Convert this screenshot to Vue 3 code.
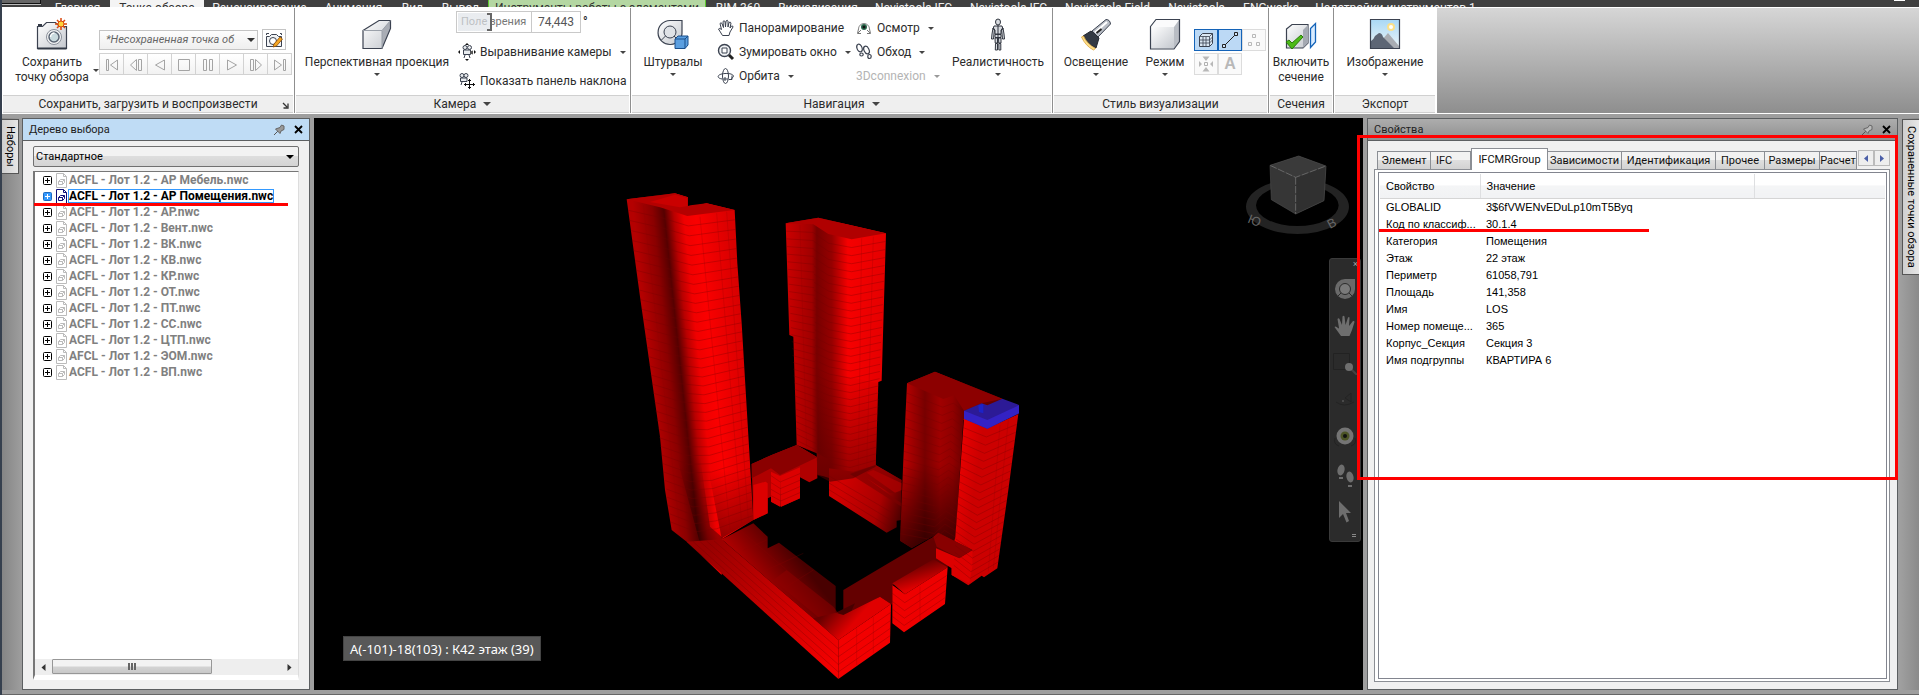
<script setup>
import { ref } from 'vue'

const menuTabs = [
  { label: 'Главная' },
  { label: 'Точка обзора', kind: 'active' },
  { label: 'Рецензирование' },
  { label: 'Анимация' },
  { label: 'Вид' },
  { label: 'Вывод' },
  { label: 'Инструменты работы с элементами', kind: 'context' },
  { label: 'BIM 360' },
  { label: 'Визуализация' },
  { label: 'Navistools IFC' },
  { label: 'Navistools IFC' },
  { label: 'Navistools Field' },
  { label: 'Navistools' },
  { label: 'ENGworks' },
  { label: 'Надстройки инструментов 1' },
]

const playback = [
  { label: 'В начало', d: 'M6.5 5.5v11h2v-11zM17.5 6v10l-7-5z' },
  { label: 'Шаг назад', d: 'M12.500 5.500v11l-6-5.500zM14.500 5.500h3v11h-3z' },
  { label: 'Воспроизвести назад', d: 'M16.500 6v10l-9-5z' },
  { label: 'Стоп', d: 'M6.500 5.500h11v11h-11z' },
  { label: 'Пауза', d: 'M7.500 5.500h3v11h-3zM13.500 5.500h3v11h-3z' },
  { label: 'Воспроизвести', d: 'M7.500 6v10l9-5z' },
  { label: 'Шаг вперед', d: 'M6.500 5.500h3v11h-3zM11.500 5.500v11l6-5.500z' },
  { label: 'В конец', d: 'M6.500 6v10l7-5zM15.500 5.500v11h2v-11z' },
]

const treeItems = [
  'ACFL - Лот 1.2 - АР Мебель.nwc',
  'ACFL - Лот 1.2 - АР Помещения.nwc',
  'ACFL - Лот 1.2 - АР.nwc',
  'ACFL - Лот 1.2 - Вент.nwc',
  'ACFL - Лот 1.2 - ВК.nwc',
  'ACFL - Лот 1.2 - КВ.nwc',
  'ACFL - Лот 1.2 - КР.nwc',
  'ACFL - Лот 1.2 - ОТ.nwc',
  'ACFL - Лот 1.2 - ПТ.nwc',
  'ACFL - Лот 1.2 - СС.nwc',
  'ACFL - Лот 1.2 - ЦТП.nwc',
  'AFCL - Лот 1.2 - ЭОМ.nwc',
  'ACFL - Лот 1.2 - ВП.nwc',
]
const selected = ref(1)

const propTabs = ['Элемент', 'IFC', 'IFCMRGroup', 'Зависимости', 'Идентификация', 'Прочее', 'Размеры', 'Расчет']
const activeTab = ref(2)

const rows = [
  ['GLOBALID', '3$6fVWENvEDuLp10mT5Byq'],
  ['Код по классиф...', '30.1.4'],
  ['Категория', 'Помещения'],
  ['Этаж', '22 этаж'],
  ['Периметр', '61058,791'],
  ['Площадь', '141,358'],
  ['Имя', 'LOS'],
  ['Номер помеще...', '365'],
  ['Корпус_Секция', 'Секция 3'],
  ['Имя подгруппы', 'КВАРТИРА 6'],
]

const fov = ref(42)

/* Floor lines of a tower: top and bottom polylines, joined by n levels. */
function floors(top, bottom, n) {
  let d = ''
  for (let i = 1; i < n; i++) {
    const t = i / n
    const k = t * (1.12 - 0.12 * t)
    d += top
      .map((p, j) => {
        const x = p[0] + (bottom[j][0] - p[0]) * k
        const y = p[1] + (bottom[j][1] - p[1]) * k
        return (j ? 'L' : 'M') + x.toFixed(1) + ' ' + y.toFixed(1)
      })
      .join('')
  }
  return d
}
const levels = [
  floors([[80, 90], [180, 112], [262, 138], [404, 120]], [[215, 1080], [290, 1110], [352, 1100], [460, 1060]], 36),
  floors([[557, 160], [640, 163]], [[592, 830], [650, 860]], 32),
  floors([[640, 163], [685, 195], [755, 208], [858, 190]], [[650, 890], [690, 900], [750, 912], [827, 890]], 32),
  floors([[921, 643], [1030, 687], [1062, 676], [1092, 700]], [[900, 1112], [1000, 1130], [1032, 1100], [1065, 1120]], 20),
  floors([[1090, 748], [1162, 776], [1255, 738]], [[1060, 1205], [1108, 1245], [1192, 1195]], 21),
  floors([[715, 1410], [873, 1302]], [[715, 1527], [870, 1418]], 5),
  floors([[877, 1245], [915, 1273], [1043, 1192]], [[877, 1360], [912, 1387], [1035, 1302]], 5),
  floors([[365, 1112], [715, 1410]], [[260, 1115], [715, 1527]], 5),
  floors([[513, 895], [540, 915], [600, 890]], [[513, 995], [543, 1010], [600, 985]], 5),
  floors([[687, 895], [890, 1010]], [[687, 978], [860, 1088]], 4),
]
</script>

<template>
  <div class="app">
    <nav class="menu">
      <span class="appbtn"></span>
      <button v-for="(t, i) in menuTabs" :key="i" type="button" :class="t.kind">{{ t.label }}</button>
      <span class="minimize"></span>
    </nav>

    <header class="ribbon">
      <section class="panel p-save">
        <div class="body">
          <button type="button" class="big save-btn">
            <svg width="36" height="34" viewBox="0 0 36 34">
              <defs>
                <linearGradient id="metal" x1="0" y1="0" x2="1" y2="1">
                  <stop offset="0" stop-color="#fff" /><stop offset="1" stop-color="#c4c8ce" />
                </linearGradient>
              </defs>
              <path d="M3.500 9.500h5l4-4h9l4 4h7v22h-29z" fill="url(#metal)" stroke="#3b4250" stroke-width="1.200" />
              <path d="M3.500 31.500h29M4 8h4" stroke="#333a46" stroke-width="2" />
              <circle cx="20" cy="20" r="7.500" fill="#f4f5f6" stroke="#8a909a" />
              <circle cx="20" cy="20" r="5" fill="#c9dade" stroke="#5a6473" stroke-width="1.500" />
              <path d="M16.500 20a4 4 0 014-4" fill="none" stroke="#fff" stroke-width="1.500" />
              <path d="M27 1v12M21 7h12M23 3l8 8M31 3l-8 8" stroke="#d9480f" stroke-width="1.500" />
              <circle cx="27" cy="7" r="3" fill="#ffd43b" stroke="#d9480f" />
            </svg>
            <span>Сохранить<br>точку обзора</span>
          </button>
          <i class="arrow save-arrow"></i>
          <div class="save-tools">
            <div class="save-row">
              <select class="vp-select" aria-label="Точка обзора"><option>*Несохраненная точка об</option></select>
              <button type="button" class="sq" aria-label="Изменить точку обзора">
                <svg width="20" height="18" viewBox="0 0 20 18">
                  <path d="M2.500 5.500h3l2-2h5l2 2h3v10h-15z" fill="#f1f3f5" stroke="#3b4250" />
                  <path d="M2.500 4V2.500H5M16 2.500h1.500V4" fill="none" stroke="#3b4250" />
                  <circle cx="9" cy="10" r="3.500" fill="#fff" stroke="#3b4250" />
                  <path d="M9 16l1-3 6-7 2.500 2-6 7z" fill="#f5a623" stroke="#8a4b08" stroke-width=".8" />
                </svg>
              </button>
            </div>
            <div class="play">
              <button v-for="p in playback" :key="p.label" type="button" :aria-label="p.label">
                <svg width="24" height="22" viewBox="0 0 24 22"><path :d="p.d" fill="none" stroke="#a4a4a4" /></svg>
              </button>
            </div>
          </div>
        </div>
        <h2>Сохранить, загрузить и воспроизвести
          <svg class="launcher" width="7" height="7" viewBox="0 0 7 7"><path d="M1 1l4 4M6 1.500V6H1.500" fill="none" stroke="#333" stroke-width="1.300" /></svg>
        </h2>
      </section>

      <section class="panel p-camera">
        <div class="body">
          <button type="button" class="big persp">
            <svg width="34" height="34" viewBox="0 0 34 34">
              <path d="M3 13l16-9.500h11.500v8L22 31.500H3z" fill="url(#metal)" />
              <path d="M22 13.500L30.500 3.500v8L22 31.500z" fill="#a9adb5" />
              <path d="M3 13.500L19 3.500h11.500v8L22 31.500H3z" fill="none" stroke="#3b4250" stroke-width="1.200" />
              <path d="M3 13.500h19v18M22 13.500l8.500-10" fill="none" stroke="#9aa0a9" />
            </svg>
            <span>Перспективная проекция</span><i class="arrow"></i>
          </button>
          <div class="cam-tools">
            <div class="fov">
              <div class="fov-slider">
                <label for="fov">Поле зрения</label>
                <input id="fov" v-model="fov" type="range" min="0" max="100">
              </div>
              <input class="fov-value" type="text" value="74,443" aria-label="Угол"><span class="deg">°</span>
            </div>
            <button type="button" class="tool">
              <svg width="18" height="18" viewBox="0 0 18 18">
                <circle cx="7" cy="4.500" r="2" fill="#e9ecef" stroke="#3b4250" /><circle cx="11.500" cy="4.500" r="2" fill="#e9ecef" stroke="#3b4250" />
                <path d="M5.500 7h7v4.500h-7zM7 12l-1 3M11 12l1 3" fill="#e9ecef" stroke="#3b4250" />
                <path d="M12 8.500l3-1v4l-3-1" fill="#555" />
                <path d="M9 0l2 2H7zM9 18l2-2H7zM0 9l2-2v4zM18 9l-2-2v4z" fill="#111" />
              </svg>
              Выравнивание камеры <i class="arrow"></i>
            </button>
            <button type="button" class="tool">
              <svg width="18" height="18" viewBox="0 0 18 18">
                <circle cx="4" cy="3.500" r="2" fill="#e9ecef" stroke="#3b4250" /><circle cx="8" cy="3.500" r="2" fill="#e9ecef" stroke="#3b4250" />
                <path d="M2.500 6h6.500v3.500H2.500zM4 10l-1 3" fill="#e9ecef" stroke="#3b4250" />
                <path d="M11.500 7v10M6 12.500h11M10 8.500h3M10 15.500h3M7.500 11v3M15.500 11v3" stroke="#111" />
              </svg>
              Показать панель наклона
            </button>
          </div>
        </div>
        <h2>Камера <i class="arrow wide"></i></h2>
      </section>

      <section class="panel p-nav">
        <div class="body">
          <button type="button" class="big wheels">
            <svg width="34" height="34" viewBox="0 0 34 34">
              <path d="M14 3.500h12v11a12 12 0 11-12-11z" fill="url(#metal)" stroke="#3b4250" stroke-width="1.200" />
              <circle cx="14" cy="15" r="6" fill="#dfe2e6" stroke="#3b4250" />
              <path d="M9.500 19l-4 4M18 19l3 3" stroke="#3b4250" />
              <path d="M19 22l3-3h10v9l-3 3.500H19z" fill="#5b9fe0" stroke="#1a4f8b" />
              <path d="M19 22h10v9.500M29 22l3-3" fill="none" stroke="#1a4f8b" />
            </svg>
            <span>Штурвалы</span><i class="arrow"></i>
          </button>
          <div class="nav-a">
            <button type="button" class="tool">
              <svg width="18" height="18" viewBox="0 0 18 18"><path d="M5.500 16.500L1.500 10q1-1.500 3 .5L3 4.500q1-1.500 2 0l1.500 4-.5-6q1-1.500 2 0l.5 5.500.5-6q1.500-1.500 2 0V8l1-4.500q1.500-1 2 .5l-1 5 1.500-2q1.500-.5 1.500 1l-3 5-1 3.500z" fill="#fff" stroke="#3b4250" /></svg>
              Панорамирование
            </button>
            <button type="button" class="tool">
              <svg width="18" height="18" viewBox="0 0 18 18"><circle cx="7.500" cy="7.500" r="6" fill="#f1f3f5" stroke="#3b4250" stroke-width="1.400" /><path d="M5 5h5v5H5z" fill="#fff" stroke="#3b4250" /><path d="M12 12l4 4" stroke="#222" stroke-width="3" /></svg>
              Зумировать окно <i class="arrow"></i>
            </button>
            <button type="button" class="tool">
              <svg width="18" height="18" viewBox="0 0 18 18"><g fill="none" stroke="#3b4250"><ellipse cx="8.500" cy="9" rx="3" ry="7.500" /><path d="M5 12c-6-1-5-5 3-5.500 8-.5 11 3 6 5" /><path d="M8 10v4M6 12h5M15 8.500v4h-3" /></g></svg>
              Орбита <i class="arrow"></i>
            </button>
          </div>
          <div class="nav-b">
            <button type="button" class="tool">
              <svg width="18" height="18" viewBox="0 0 18 18"><path d="M3.500 10a5.500 5.500 0 1111 0" fill="#fff" stroke="#888" /><circle cx="9" cy="8" r="3" fill="#2d6a4f" /><circle cx="9" cy="8" r="1.500" fill="#111" /><path d="M3.500 10l-1 4.500h3.500M14.500 10l1 4.500H12M3 14l3-3M15 14l-3-3" fill="none" stroke="#777" /></svg>
              Осмотр <i class="arrow"></i>
            </button>
            <button type="button" class="tool">
              <svg width="18" height="18" viewBox="0 0 18 18"><g fill="#fff" stroke="#3b4250" stroke-width="1.200"><ellipse cx="4.500" cy="5" rx="2.500" ry="4" transform="rotate(-20 4.500 5)" /><ellipse cx="6.500" cy="11.500" rx="1.700" ry="1.500" /><ellipse cx="11.500" cy="7" rx="2.500" ry="4" transform="rotate(-25 11.500 7)" /><ellipse cx="14.500" cy="13.500" rx="1.700" ry="2" /></g></svg>
              Обход <i class="arrow"></i>
            </button>
            <button type="button" class="tool off" disabled>3Dconnexion <i class="arrow"></i></button>
          </div>
          <button type="button" class="big real">
            <svg width="20" height="34" viewBox="0 0 20 34">
              <g fill="#d8dbe0" stroke="#30353f">
                <ellipse cx="10" cy="5" rx="2.500" ry="3" />
                <path d="M6 9h8l1 3-2 1v4H7v-4l-2-1zM7 17.500h6v3H7zM7 21h2.500v5H7.200zM10.500 21H13v5h-2.300zM7.500 26.500h2V33H7.300zM10.800 26.500h2V33h-1.900zM5 11l-1 6-.5 5h2l.5-5 .5-5zM15 11l1 6 .5 5h-2l-.5-5-.5-5z" />
                <path d="M10 8v12" />
              </g>
            </svg>
            <span>Реалистичность</span><i class="arrow"></i>
          </button>
        </div>
        <h2>Навигация <i class="arrow wide"></i></h2>
      </section>

      <section class="panel p-style">
        <div class="body">
          <button type="button" class="big light">
            <svg width="34" height="34" viewBox="0 0 34 34">
              <path d="M13 14L27 2.500q4 0 4.500 4.500L19 20z" fill="#b9bec6" stroke="#3b4250" />
              <path d="M16 15.500L28 5" stroke="#fff" stroke-width="2" />
              <path d="M12 14l8 7-3 10q-9-4-13-12z" fill="#343a44" stroke="#22262e" />
              <path d="M2.500 20q4 9 12 13l2-1.500Q8 27 4.500 19z" fill="#ffe08a" stroke="#d9a441" stroke-width=".8" />
              <path d="M17.500 16l5-4" stroke="#222" stroke-width="2" />
            </svg>
            <span>Освещение</span><i class="arrow"></i>
          </button>
          <button type="button" class="big mode">
            <svg width="34" height="34" viewBox="0 0 34 34">
              <path d="M2.500 9.500L8 2.500h23.500v22L26 32H2.500z" fill="#fbfbfc" />
              <path d="M3 10h23v21.500H3z" fill="url(#metal)" />
              <path d="M26 10l5-7v21.500L26 31z" fill="#b9bdc4" />
              <path d="M2.500 9.500L8 2.500h23.500v22L26 32H2.500z" fill="none" stroke="#3b4250" stroke-width="1.200" />
            </svg>
            <span>Режим</span><i class="arrow"></i>
          </button>
          <div class="toggles">
            <button type="button" class="on" aria-label="Поверхности">
              <svg width="18" height="18" viewBox="0 0 18 18"><path d="M2.500 5.500l3-3h10v10l-3 3h-10z" fill="#dbe7f2" stroke="#3b4250" /><path d="M2.500 5.500h10v10M12.500 5.500l3-3M6 5.500v10M9 5.500v10M2.500 9h10l3-3M2.500 12h10l3-3" fill="none" stroke="#3b4250" stroke-width=".8" /></svg>
            </button>
            <button type="button" class="on" aria-label="Линии">
              <svg width="18" height="18" viewBox="0 0 18 18"><path d="M3 15L15 3" stroke="#222" /><path d="M1.500 13.500h3v3h-3zM13.500 1.500h3v3h-3z" fill="#cfe3f7" stroke="#222" /></svg>
            </button>
            <button type="button" aria-label="Точки">
              <svg width="18" height="18" viewBox="0 0 18 18"><path d="M7.500 3.500h3v3h-3zM3.500 11.500h3v3h-3zM11.500 11.500h3v3h-3z" fill="none" stroke="#b8b8b8" /></svg>
            </button>
            <button type="button" aria-label="Точки привязки">
              <svg width="18" height="18" viewBox="0 0 18 18"><path d="M7.500 7.500h3v3h-3z" fill="none" stroke="#b0b0b0" /><path d="M9 6L5.500 1.500h7zM9 12l-3.500 4.500h7zM5 9L2 6v6zM13 9l3-3v6z" fill="#b8b8b8" /></svg>
            </button>
            <button type="button" class="letter">A</button>
          </div>
        </div>
        <h2>Стиль визуализации</h2>
      </section>

      <section class="panel p-section">
        <div class="body">
          <button type="button" class="big">
            <svg width="34" height="34" viewBox="0 0 34 34">
              <path d="M2.500 12L8 7.500h16V26l-5 5H2.500z" fill="url(#metal)" stroke="#3b4250" stroke-width="1.200" />
              <path d="M19 13l5-5v18l-5 5z" fill="#a4a9b2" />
              <path d="M26.500 11.500l5-5v18.500l-5 5.500z" fill="#d9ecff" stroke="#1463b8" stroke-width="1.300" />
              <path d="M2 25l3-2 3 3 9-8 2 2L8 32z" fill="#4cbb17" stroke="#2b7a0b" />
            </svg>
            <span>Включить<br>сечение</span>
          </button>
        </div>
        <h2>Сечения</h2>
      </section>

      <section class="panel p-export">
        <div class="body">
          <button type="button" class="big">
            <svg width="34" height="34" viewBox="0 0 34 34">
              <defs><linearGradient id="sky" x1="0" y1="0" x2="0" y2="1"><stop offset="0" stop-color="#a9d8f5" /><stop offset="1" stop-color="#eef6f8" /></linearGradient></defs>
              <path d="M2.500 2.500h29v29h-29z" fill="url(#sky)" />
              <circle cx="23" cy="10" r="3" fill="#fff" stroke="#fbe08a" stroke-width="2" />
              <path d="M14 23l6-7 11 13v2H15z" fill="#a9adb3" />
              <path d="M3 24q3-2 4-5l4-3q3 0 4 4l11 11H3z" fill="#5d6675" />
              <path d="M2.500 2.500h29v29h-29z" fill="none" stroke="#3b4250" stroke-width="1.200" />
            </svg>
            <span>Изображение</span><i class="arrow"></i>
          </button>
        </div>
        <h2>Экспорт</h2>
      </section>
    </header>

    <main class="workspace">
      <div class="rail left"><button type="button" class="vtab">Наборы</button></div>

      <section class="dock tree-dock">
        <header class="dock-title">
          <h1>Дерево выбора</h1>
          <button type="button" aria-label="Закрепить"><svg width="12" height="12" viewBox="0 0 12 12"><path d="M1 11l4-4" stroke="#555" /><path d="M2.500 5l4.500 4.500 1-2.500 3-1.500V2L8.500 1 7 3.500z" fill="#999" stroke="#666" /></svg></button>
          <button type="button" aria-label="Закрыть"><svg width="9" height="9" viewBox="0 0 9 9"><path d="M1 1l7 7M8 1L1 8" stroke="#000" stroke-width="1.800" /></svg></button>
        </header>
        <div class="tree-body">
          <select class="combo" aria-label="Вид дерева"><option>Стандартное</option></select>
          <div class="tree-frame">
            <ul class="tree">
              <li v-for="(t, i) in treeItems" :key="t" :class="{ sel: i === selected }" @click="selected = i">
                <svg class="plus" width="9" height="9" viewBox="0 0 9 9"><rect class="pb" x=".5" y=".5" width="8" height="8" rx="1" /><path class="pp" d="M2 4.500h5M4.500 2v5" /></svg>
                <svg class="doc" width="13" height="15" viewBox="0 0 13 15"><path d="M1.500.500h7l3 3v11h-10zM8.500.500v3h3M3.500 8.500h4v3h-4zM3.500 8.500l2-2h4v3l-2 2M7.500 8.500l2-2" /></svg>
                <span>{{ t }}</span>
              </li>
            </ul>
            <div class="hscroll">
              <button type="button" aria-label="Влево"><svg width="5" height="7" viewBox="0 0 5 7"><path d="M4.500 0v7L.5 3.500z" fill="#333" /></svg></button>
              <div class="track"><div class="thumb"><i></i><i></i><i></i></div></div>
              <button type="button" aria-label="Вправо"><svg width="5" height="7" viewBox="0 0 5 7"><path d="M.5 0v7l4-3.500z" fill="#333" /></svg></button>
            </div>
            <span class="mark"></span>
          </div>
        </div>
      </section>

      <section class="viewport">
        <svg class="scene" viewBox="0 0 1049 572" preserveAspectRatio="xMidYMid meet">
          <defs>
            <linearGradient id="ga" gradientUnits="userSpaceOnUse" x1="150" y1="600" x2="435" y2="570">
              <stop offset="0" stop-color="#b40000" /><stop offset=".2" stop-color="#8a0000" /><stop offset=".32" stop-color="#560000" />
              <stop offset=".42" stop-color="#b80000" /><stop offset=".52" stop-color="#f00000" /><stop offset=".65" stop-color="#fa0000" /><stop offset="1" stop-color="#d80000" />
            </linearGradient>
            <linearGradient id="gb" gradientUnits="userSpaceOnUse" x1="557" y1="0" x2="858" y2="0">
              <stop offset="0" stop-color="#cc0000" /><stop offset=".26" stop-color="#a00000" /><stop offset=".31" stop-color="#780000" />
              <stop offset=".46" stop-color="#960000" /><stop offset=".62" stop-color="#f60000" /><stop offset="1" stop-color="#e40000" />
            </linearGradient>
            <linearGradient id="gc" gradientUnits="userSpaceOnUse" x1="910" y1="0" x2="1095" y2="0">
              <stop offset="0" stop-color="#bc0000" /><stop offset=".35" stop-color="#780000" /><stop offset=".6" stop-color="#a00000" />
              <stop offset=".8" stop-color="#900000" /><stop offset="1" stop-color="#680000" />
            </linearGradient>
            <linearGradient id="gd" gradientUnits="userSpaceOnUse" x1="1078" y1="0" x2="1255" y2="25">
              <stop offset="0" stop-color="#b80000" /><stop offset=".2" stop-color="#f80000" /><stop offset=".5" stop-color="#f80000" /><stop offset="1" stop-color="#cc0000" />
            </linearGradient>
            <linearGradient id="shade" x1="0" y1="0" x2="0" y2="1">
              <stop offset="0" stop-color="#000" stop-opacity="0" /><stop offset="1" stop-color="#000" stop-opacity=".75" />
            </linearGradient>
            <linearGradient id="soft" x1="0" y1="0" x2="0" y2="1">
              <stop offset="0" stop-color="#500000" stop-opacity="0" /><stop offset="1" stop-color="#500000" stop-opacity=".6" />
            </linearGradient>
            <linearGradient id="gp" gradientUnits="userSpaceOnUse" x1="330" y1="1120" x2="720" y2="1470">
              <stop offset="0" stop-color="#980000" /><stop offset=".5" stop-color="#c80000" /><stop offset="1" stop-color="#f40000" />
            </linearGradient>
            <linearGradient id="gpt" gradientUnits="userSpaceOnUse" x1="480" y1="1260" x2="600" y2="1170">
              <stop offset="0" stop-color="#b00000" /><stop offset="1" stop-color="#480000" />
            </linearGradient>
            <linearGradient id="gr" gradientUnits="userSpaceOnUse" x1="700" y1="1300" x2="780" y2="1370">
              <stop offset="0" stop-color="#680000" /><stop offset=".8" stop-color="#e00000" />
            </linearGradient>
            <linearGradient id="gm" gradientUnits="userSpaceOnUse" x1="940" y1="1180" x2="960" y2="1250">
              <stop offset="0" stop-color="#600000" /><stop offset="1" stop-color="#e00000" />
            </linearGradient>
            <linearGradient id="gq" gradientUnits="userSpaceOnUse" x1="720" y1="960" x2="920" y2="1020">
              <stop offset="0" stop-color="#d00000" /><stop offset=".6" stop-color="#a80000" /><stop offset="1" stop-color="#400000" />
            </linearGradient>
          </defs>
          <g transform="translate(286 52) scale(.33333)">
            <!-- rear connector -->
            <path d="M455 882L515 855 590 825 652 862V925L628 937 600 922V985L543 1010 513 995V980L503 985V1030L460 1050z" fill="#b00000" />
            <path d="M455 882L515 855 590 825 652 862 540 915 513 895 455 925z" fill="#8a0000" />
            <path d="M460 945L497 935 503 940V1030L460 1050zM513 905L540 918V1010L513 995zM540 918L600 892V985L543 1010z" fill="#dc0000" />
            <!-- middle tower -->
            <path d="M557 160L655 143 858 190 845 632 835 636 827 890 760 912 690 920 652 915 650 850 590 825 580 500 568 495z" fill="url(#gb)" />
            <path d="M557 160L655 143 858 190 755 208 685 192 640 163z" fill="#b00000" />
            <path d="M652 850L690 870V925L652 913z" fill="#900000" />
            <path d="M687 895L760 905 827 885 905 930V1050L890 1052V1072L860 1088 687 978z" fill="url(#gq)" />
            <path d="M750 912L827 885 905 930 900 965 870 970 800 925 890 990 905 1000V1010z" fill="#7c0000" opacity=".6" />
            <path d="M800 908L820 900 905 940V960L885 968z" fill="#b80000" opacity=".6" />
            <path d="M652 600L835 640 827 890 760 925 690 935 652 915z" fill="url(#soft)" />
            <!-- right tower -->
            <path d="M921 640L1005 605 1207 686 1160 760 1090 750 1065 1120 1015 1090 935 1134 900 1112 910 870z" fill="url(#gc)" />
            <path d="M921 640L1005 605 1207 686 1145 700 1092 722 1062 676 1030 687z" fill="#8c0000" />
            <path d="M905 880L1080 880 1065 1120 1015 1090 935 1134 900 1112z" fill="url(#shade)" opacity=".8" />
            <path d="M1092 745L1162 775 1255 732 1225 960 1192 1195 1152 1222 1145 1217 1105 1246 1055 1215V1150L1066 1100z" fill="url(#gd)" />
            <!-- inner wing -->
            <path d="M730 1260L865 1180 1000 1100 1015 1088 1117 1140 1080 1165 1043 1190 877 1245V1305L840 1280 730 1345z" fill="#640000" />
            <path d="M1000 1100L1015 1088 1117 1140 1078 1165 1010 1130z" fill="#880000" />
            <path d="M1008 1135L1078 1165 1117 1142V1190L1108 1240 1055 1215 1055 1195 1008 1165z" fill="#dc0000" />
            <path d="M877 1240L1000 1168 1043 1192 915 1273z" fill="url(#gm)" />
            <path d="M877 1245L915 1273 1043 1192 1035 1302 912 1387 877 1360z" fill="#ee0000" />
            <!-- left tower -->
            <path d="M80 88L225 70 264 82V112L320 100 404 120 412 280 425 460 450 880 460 1050 370 1105 365 1215 260 1115 215 1080 195 960 180 800 120 380z" fill="url(#ga)" />
            <path d="M80 88L225 70 264 82V108L272 106 320 100 404 120 262 138 180 112z" fill="#b40000" />
            <path d="M150 96L225 74 262 84V108L240 112z" fill="#ca0000" />
            <path d="M230 860L300 860 330 1070 370 1105 365 1160 300 1120z" fill="url(#shade)" opacity=".6" />
            <path d="M325 900L452 900 460 1050 365 1105z" fill="url(#soft)" />
            <!-- front wing -->
            <path d="M365 1108L460 1060 503 1100V1135L537 1118 707 1248V1328L765 1300 715 1410z" fill="url(#gpt)" />
            <path d="M260 1115L365 1108 715 1410V1527z" fill="url(#gp)" />
            <path d="M560 1200L700 1310 715 1330 690 1370 520 1230z" fill="#900000" opacity=".5" />
            <path d="M640 1345L707 1328 730 1335 840 1280 873 1302 715 1410z" fill="url(#gr)" />
            <path d="M715 1410L873 1302 870 1418 715 1527z" fill="#f20000" />
            <path v-for="(d, i) in levels" :key="i" :d="d" fill="none" stroke="#700000" stroke-opacity=".48" stroke-width="2" />
            <g fill="none" stroke="#900000" stroke-opacity=".35" stroke-width="2">
              <path d="M300 140L390 1080M350 130L425 1060M380 125L445 1050M130 105L240 1085M785 205L775 900M820 200L800 895M1200 765L1165 1205M1225 750L1180 1195M600 165L620 840M770 1375V1485M820 1340V1450M960 1250V1350" />
              <path d="M420 1080L560 1200M500 1200L610 1150M560 1250L640 1200M430 1140L500 1110" />
            </g>
            <!-- highlighted unit -->
            <path d="M1092 722L1145 700 1162 706 1207 686 1257 705V730L1162 776 1092 746z" fill="#2c1a96" />
            <path d="M1092 722L1162 750 1257 706V730L1162 776 1092 746z" fill="#3422c4" />
            <path d="M1135 706L1150 702V730L1137 726z" fill="#1c22c8" />
          </g>
        </svg>

        <svg class="cube" viewBox="60 30 342 261">
          <path fill-rule="evenodd" d="M78 200a154 82 0 01309 0a154 82 0 01-309 0zM108 196a124 62 0 00248 0a124 62 0 00-248 0z" fill="#232323" />
          <path d="M150 76L236 48 318 78 312 182 227 222 154 179z" fill="#363636" />
          <path d="M150 76L236 48 318 78 227 112z" fill="#3a3a3a" />
          <path d="M227 112L318 78 312 182 227 222z" fill="#303030" />
          <path d="M150 76L227 112 318 78M227 112V222" fill="none" stroke="#808080" stroke-width="2" stroke-dasharray="22 4" />
          <path d="M150 76L236 48 318 78 312 182 227 222 154 179z" fill="none" stroke="#4a4a4a" stroke-width="2" />
          <text x="84" y="256" transform="rotate(22 106 243)">Ю</text>
          <text x="322" y="262" transform="rotate(-28 336 248)">В</text>
        </svg>

        <aside class="navbar">
          <i class="nb-x">×</i>
          <button type="button" aria-label="Штурвал"><svg width="22" height="22" viewBox="0 0 22 22"><path d="M11 1h10v10A10 10 0 1111 1z" fill="#6a6a6a" /><circle cx="11" cy="11" r="5.500" fill="#7a7a7a" stroke="#2b2b2b" /><path d="M7 15l-3 3M15 15l3 3" stroke="#2b2b2b" /></svg></button>
          <button type="button" aria-label="Панорамирование"><svg width="22" height="22" viewBox="0 0 22 22"><path d="M7 21L.5 12q1-1.500 4 1.500L5 13 3.500 4q1-1.500 2 0L8 10 8.500 1.500q1-1.500 2 0L11.500 10 14 2.500q1.500-1 1.500.5L15 11l4-5q1.500-.5 1.500 1L18 15l-2.500 6z" fill="#6e6e6e" /></svg></button>
          <button type="button" aria-label="Зумирование"><svg width="24" height="24" viewBox="0 0 24 24"><path d="M.5 2.500h16v16H.5z" fill="none" stroke="#222" /><path d="M18 18l6 6" stroke="#444" stroke-width="2" /><circle cx="16" cy="16" r="4" fill="#6e6e6e" /></svg></button>
          <button type="button" aria-label="Орбита" class="faint"><svg width="22" height="22" viewBox="0 0 22 22"><path d="M11 8l6-5v9zM2 12q8 6 18 0" fill="none" stroke="#232323" /><circle cx="9" cy="11" r="1" fill="#555" /></svg></button>
          <button type="button" aria-label="Осмотр"><svg width="24" height="22" viewBox="0 0 24 22"><path d="M2 12q-2 6 4 8M22 12q2 6-4 8" fill="none" stroke="#222" /><circle cx="12" cy="10" r="8.500" fill="#747474" /><circle cx="12" cy="10" r="4.500" fill="#4c5426" /><circle cx="12" cy="10" r="2" fill="#111" /></svg></button>
          <button type="button" aria-label="Обход"><svg width="20" height="24" viewBox="0 0 20 24"><g fill="#6e6e6e"><ellipse cx="6" cy="7" rx="3.500" ry="5.500" transform="rotate(15 6 7)" /><path d="M4 14h4v2H4zM13 22h4v2h-4z" /><ellipse cx="15" cy="14" rx="3.500" ry="5.500" transform="rotate(-15 15 14)" /></g></svg></button>
          <button type="button" aria-label="Выбрать"><svg width="14" height="22" viewBox="0 0 14 22"><path d="M1 0l12 12H8l3 8-2.500 1.500L5 13l-4 4z" fill="#6e6e6e" /></svg></button>
          <i class="nb-m"></i>
        </aside>

        <div class="status">А(-101)-18(103) : К42 этаж (39)</div>
      </section>

      <section class="dock prop-dock">
        <header class="dock-title">
          <h1>Свойства</h1>
          <button type="button" aria-label="Закрепить"><svg width="12" height="12" viewBox="0 0 12 12"><path d="M1 11l4-4" stroke="#555" /><path d="M2.500 5l4.500 4.500 1-2.500 3-1.500V2L8.500 1 7 3.500z" fill="#bbb" stroke="#666" /></svg></button>
          <button type="button" aria-label="Закрыть"><svg width="9" height="9" viewBox="0 0 9 9"><path d="M1 1l7 7M8 1L1 8" stroke="#000" stroke-width="1.800" /></svg></button>
        </header>
        <div class="prop-body">
          <div class="tabs">
            <button v-for="(t, i) in propTabs" :key="t" type="button" :class="{ cur: i === activeTab }" @click="activeTab = i">{{ t }}</button>
            <div class="spin">
              <button type="button" aria-label="Назад"><svg width="4" height="7" viewBox="0 0 4 7"><path d="M4 0v7L0 3.500z" fill="#4b5fa8" /></svg></button>
              <button type="button" aria-label="Вперед"><svg width="4" height="7" viewBox="0 0 4 7"><path d="M0 0v7l4-3.500z" fill="#4b5fa8" /></svg></button>
            </div>
          </div>
          <div class="page">
            <div class="list">
              <table>
                <colgroup><col class="c1"><col class="c2"><col></colgroup>
                <thead><tr><th>Свойство</th><th>Значение</th><th></th></tr></thead>
                <tbody>
                  <tr v-for="r in rows" :key="r[0]"><td>{{ r[0] }}</td><td>{{ r[1] }}</td><td></td></tr>
                </tbody>
              </table>
              <span class="mark"></span>
            </div>
          </div>
        </div>
        <div class="frame-mark"></div>
      </section>

      <div class="rail right"><button type="button" class="vtab">Сохраненные точки обзора</button></div>
    </main>
  </div>
</template>

<style>
html, body { margin: 0; background: #9e9e9e; overflow: hidden; }
</style>

<style scoped>
* { box-sizing: border-box; }
button { font: inherit; color: inherit; background: none; border: 0; padding: 0; margin: 0; }
svg { display: block; flex: none; }
h1, h2 { margin: 0; font: inherit; }

.app {
  display: flex; flex-direction: column; height: 100vh;
  border-left: 2px solid #36404e;
  background: #9e9e9e; color: #2b2b2b;
  font: 12px/15px Roboto, "Noto Sans", sans-serif;
}

/* menu tabs */
.menu {
  position: relative; flex: none; height: 8px; overflow: hidden; background: #404040; color: #f0f0f0;
  border-bottom: 1px solid #fff;
  display: grid; align-items: end; white-space: nowrap;
  grid-template-columns: 43px 65px 94px 111px 77px 41px 55px 218px 64px 96px 95px 95px 103px 75px 74px 175px 1fr;
}
.menu button { line-height: 16px; height: 16px; display: flex; justify-content: center; }
.menu .active { background: #f4f4f4; color: #333; }
.menu .context { background: #b4d7a2; color: #333; border: 1px solid #5ec92f; border-top: 0; }
.appbtn { align-self: start; width: 39px; height: 4px; background: #666; border: 1px solid #111; border-width: 0 1px 1px 0; box-shadow: 0 1px #bbb; }
.minimize { align-self: start; justify-self: end; width: 11px; height: 1px; margin-right: 14px; background: #fff; }

/* ribbon */
.ribbon { flex: none; display: flex; height: 106px; background: linear-gradient(#d6d6d6, #8e8e8e); border-bottom: 1px solid #fff; }
.panel { flex: none; display: flex; flex-direction: column; background: #fff; border-right: 1px solid #8f8f8f; padding: 0 1px; }
.panel .body { flex: 1; display: flex; align-items: flex-start; }
.panel h2 {
  position: relative; height: 18px; line-height: 16px; background: #efefef; border: 1px solid #d0d0d0; border-width: 1px 0;
  display: flex; align-items: center; justify-content: center; gap: 7px; white-space: nowrap;
}
.p-save { width: 293px; }
.p-camera { width: 336px; }
.p-nav { width: 422px; }
.p-style { width: 216px; }
.p-section { width: 65px; }
.p-export { width: 103px; border-right: 1px solid #fff; }
.launcher { position: absolute; right: 4px; top: 6px; }

.arrow { display: inline-block; flex: none; width: 0; height: 0; border: 3px solid transparent; border-top: 3px solid #444; border-bottom: 0; }
.arrow.wide { border-width: 4px 4px 0; }
.big { display: flex; flex-direction: column; align-items: center; padding-top: 9px; white-space: nowrap; text-align: center; }
.big span { margin-top: 4px; line-height: 15px; }
.big .arrow { margin-top: 3px; }
.p-section .big, .p-export .big { flex: 1; }
.save-btn { width: 82px; margin-left: 8px; }
.save-arrow { margin-top: 61px; }
.save-tools { display: flex; flex-direction: column; gap: 3px; padding: 21px 0 0; }
.save-row { position: relative; display: flex; align-items: center; gap: 4px; }
.vp-select {
  width: 159px; height: 20px; padding: 0 16px 0 6px; border: 1px solid #c4c4c4; border-radius: 0; appearance: none; overflow: hidden;
  font: italic 11px Roboto, "Noto Sans", sans-serif; color: #666; background: linear-gradient(#fdfdfd, #efefef);
}
.save-row::after { content: ""; position: absolute; left: 148px; top: 9px; border: 4px solid transparent; border-top-color: #333; border-bottom: 0; pointer-events: none; }
.sq { width: 24px; height: 21px; border: 1px solid #c4c4c4; display: grid; place-items: center; }
.play { display: flex; border: 1px solid #d2d2d2; border-right: 0; background: linear-gradient(#fff, #f2f2f2); }
.play button { width: 24px; height: 20px; border-right: 1px solid #d2d2d2; display: grid; place-items: center; overflow: hidden; }

.persp { width: 146px; margin-left: 8px; }
.cam-tools { display: flex; flex-direction: column; padding: 3px 0 0 6px; }
.fov { display: flex; align-items: center; height: 22px; color: #555; }
.deg { font-weight: bold; color: #222; }
.fov-slider { position: relative; width: 76px; height: 22px; border: 1px solid #c9c9c9; padding: 2px 0 0 4px; white-space: nowrap; }
.fov-slider label { display: block; line-height: 16px; color: #777; font-size: 11px; }
.fov-slider input {
  position: absolute; inset: 1px 0 1px 1px; width: 73px; height: 18px; margin: 0; appearance: none;
  background: linear-gradient(90deg, #dfe3e8aa 32px, transparent 32px);
}
.fov-slider input::-webkit-slider-thumb { appearance: none; width: 5px; height: 18px; border: 2px solid #666; border-left: 0; background: transparent; }
.fov-value { width: 49px; height: 22px; margin: 0 2px 0 0; border: 1px solid #c9c9c9; border-left: 0; text-align: center; padding: 0; font: inherit; color: #555; }
.tool { display: flex; align-items: center; gap: 4px; height: 24px; white-space: nowrap; }
.tool .arrow { margin-left: 4px; }
.tool.off { color: #b4b4b4; }
.tool.off .arrow { border-top-color: #999; }
.cam-tools .tool { height: 20px; margin-top: 9px; }
.cam-tools .tool svg, .nav-a svg, .nav-b svg { margin-left: 2px; }

.wheels { width: 64px; margin-left: 9px; }
.nav-a { width: 137px; padding: 8px 0 0 10px; display: flex; flex-direction: column; align-items: flex-start; }
.nav-b { width: 97px; padding: 8px 0 0 11px; display: flex; flex-direction: column; align-items: flex-start; }
.nav-b .off { margin-left: 3px; }
.real { width: 94px; margin-left: 12px; }

.light { width: 70px; margin-left: 7px; }
.mode { width: 48px; margin-left: 10px; }
.toggles { display: grid; grid-template-columns: 24px 24px 24px; grid-auto-rows: 22px; row-gap: 2px; padding: 21px 0 0 5px; }
.toggles button { display: grid; place-items: center; border: 1px solid #dcdcdc; background: #fafafa; }
.toggles .on { border: 1px solid #1463b8; background: #bcd9f5; }
.toggles .letter { font: bold 16px "Liberation Sans", sans-serif; color: #b8b8b8; }

/* workspace */
.workspace { flex: 1; min-height: 0; display: flex; padding: 4px 0; border-bottom: 1px solid #666; background: #9e9e9e; }
.rail { flex: none; display: flex; align-items: flex-start; }
.rail.left { width: 20px; background: linear-gradient(90deg, #858585, #9e9e9e); }
.rail.right { width: 21px; justify-content: flex-end; background: linear-gradient(90deg, #a2a2a2, #8a8a8a); }
.vtab {
  writing-mode: vertical-rl; width: 17px; margin-top: 1px; padding: 6px 0; line-height: 15px; font-size: 11px; color: #000;
  border: 1px solid #555; background: linear-gradient(90deg, #cfcfcf, #e6e6e6); white-space: nowrap;
}
.left .vtab { border-left: 0; }
.right .vtab { border-right: 0; }

.dock { position: relative; flex: none; display: flex; flex-direction: column; border: 1px solid #5c5f61; background: #f0f0f0; color: #000; }
.tree-dock { width: 288px; margin-right: 4px; }
.prop-dock { width: 531px; margin-left: 4px; }
.dock-title { flex: none; height: 22px; display: flex; align-items: center; gap: 9px; padding: 0 6px; border-bottom: 1px solid #5c5f61; color: #222; }
.dock-title h1 { flex: 1; line-height: 16px; font-size: 11px; }
.tree-dock .dock-title { background: #bfdcf5; }
.prop-dock .dock-title { background: linear-gradient(#adadad, #8f8f8f); }

.tree-body { position: relative; flex: 1; min-height: 0; display: flex; flex-direction: column; padding: 5px 10px 9px; }
.combo {
  flex: none; height: 21px; padding: 0 2px; border: 1px solid #707070; border-radius: 2px; appearance: none; color: #000;
  font: 11px Roboto, "Noto Sans", sans-serif; background: linear-gradient(#f2f2f2 50%, #dddddd 50%, #d4d4d4);
}
.tree-body::after { content: ""; position: absolute; right: 15px; top: 14px; border: 4px solid transparent; border-top-color: #000; border-bottom: 0; pointer-events: none; }
.tree-frame { position: relative; flex: 1; display: flex; flex-direction: column; margin-top: 4px; background: #fff; border: 1px solid #777; border-right-color: #ddd; border-bottom: 5px solid #fff; border-left-width: 2px; }
.tree { flex: 1; list-style: none; margin: 0; padding: 0 0 0 8px; font: bold 12px/16px Roboto, "Noto Sans", sans-serif; color: #808080; }
.tree li { display: flex; align-items: center; height: 16px; white-space: nowrap; }
.plus { margin-right: 3px; }
.doc { fill: none; stroke: #bbb; }
.pb { fill: #fff; stroke: #000; }
.pp { stroke: #000; }
.tree span { line-height: 12px; border: 1px solid transparent; }
.sel { color: #000; }
.sel .doc { stroke: #10107a; }
.sel .pb { fill: #3399ff; stroke: #1c6ac0; }
.sel .pp { stroke: #fff; }
.tree .sel span { border-color: #3399ff; }
.hscroll { flex: none; display: flex; height: 16px; background: #eee; }
.hscroll button { width: 17px; display: grid; place-items: center; }
.track { flex: 1; display: flex; }
.thumb { width: 70%; height: 15px; display: flex; gap: 1px; align-items: center; justify-content: center; border: 1px solid #979797; border-radius: 1px; background: linear-gradient(#f3f3f3 45%, #d3d3d3 55%, #c8c8c8); }
.thumb i { width: 2px; height: 7px; background: #666; }
.mark { position: absolute; height: 3px; background: #f00; }
.tree-frame .mark { left: -1px; right: 10px; top: 31px; }

/* 3D view */
.viewport { position: relative; flex: 1; min-width: 0; background: #000; overflow: hidden; }
.scene { width: 100%; height: 100%; }
.cube { position: absolute; right: 9px; top: 32px; width: 114px; height: 87px; }
.cube text { font: 38px "Liberation Sans", sans-serif; fill: #666; }
.navbar { position: absolute; right: 2px; top: 140px; width: 32px; height: 284px; padding: 19px 0 18px; display: flex; flex-direction: column; align-items: center; justify-content: space-between; background: #2b2b2b; border: 1px solid #3a3a3a; border-radius: 3px; }
.nb-x { position: absolute; right: 2px; top: 1px; font: 9px/9px "Liberation Sans", sans-serif; color: #aaa; }
.nb-m { position: absolute; right: 4px; bottom: 4px; width: 4px; border-top: 1px solid #888; height: 3px; border-bottom: 1px solid #888; }
.status { position: absolute; left: 29px; bottom: 29px; height: 25px; padding: 0 6px; font: 13px/25px "Noto Sans", sans-serif; color: #fff; background: #585858; border: 1px solid #444; white-space: nowrap; }

/* properties */
.prop-body { flex: 1; min-height: 0; display: flex; flex-direction: column; padding: 7px 7px 7px 6px; }
.tabs { flex: none; height: 21px; display: grid; grid-template-columns: 54px 40px 77px 74px 94px 49px 55px 37px 1fr; align-items: end; padding-left: 3px; position: relative; z-index: 1; font-size: 11px; color: #111; }
.tabs > button { height: 18px; line-height: 16px; overflow: hidden; white-space: nowrap; border: 1px solid #8b8e94; border-bottom: 0; background: linear-gradient(#f2f2f2 50%, #dedede 50%, #d2d2d2); }
.tabs > button + button { border-left: 0; }
.tabs > button:nth-child(2) { text-align: left; padding-left: 5px; }
.tabs > button.cur { height: 22px; margin-bottom: -1px; background: #fff; border-left: 1px solid #8b8e94; }
.spin { display: flex; align-self: start; justify-content: flex-end; margin-top: 2px; }
.spin button { width: 16px; height: 16px; display: grid; place-items: center; border: 1px solid #bbb; background: #eee; }
.page { flex: 1; min-height: 0; display: flex; padding: 2px 2px 2px 3px; border: 1px solid #8b8e94; background: #fff; }
.list { position: relative; flex: 1; border: 1px solid #82858f; background: #fff; padding: 1px; }
table { width: 100%; border-collapse: collapse; table-layout: fixed; font: 11px/17px "Liberation Sans", sans-serif; color: #000; }
.c1 { width: 100px; }
.c2 { width: 274px; }
th { height: 24px; padding: 2px 6px 0; text-align: left; font-weight: normal; border-right: 1px solid #dedfe1; border-bottom: 1px solid #d5d5d5; background: linear-gradient(#fff 45%, #f4f5f6 50%, #f1f2f4); }
th:last-child { border-right: 0; }
td { height: 17px; padding: 0 6px; white-space: nowrap; }
.list .mark { left: 0; width: 270px; top: 56px; }
.frame-mark { position: absolute; left: -11px; right: -1px; top: 16px; height: 345px; border: 3px solid #f00; pointer-events: none; }
</style>
